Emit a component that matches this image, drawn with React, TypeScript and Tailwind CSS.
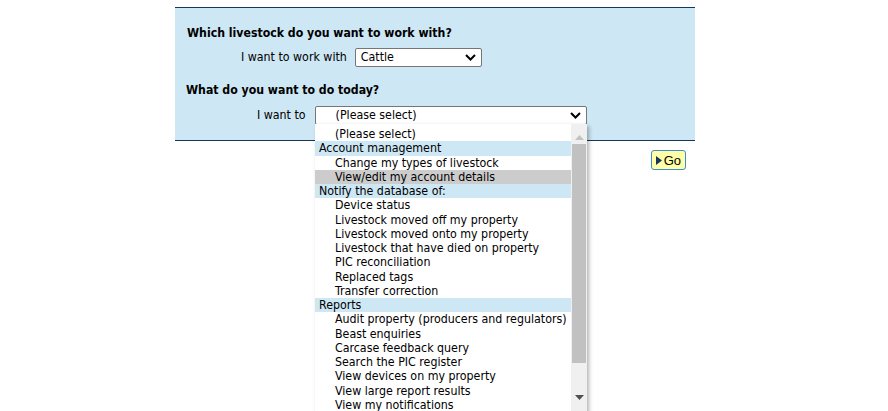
import React from "react";

const groups: { label?: string; items: string[] }[] = [
	{ items: ["(Please select)"] },
	{
		label: "Account management",
		items: ["Change my types of livestock", "View/edit my account details"],
	},
	{
		label: "Notify the database of:",
		items: [
			"Device status",
			"Livestock moved off my property",
			"Livestock moved onto my property",
			"Livestock that have died on property",
			"PIC reconciliation",
			"Replaced tags",
			"Transfer correction",
		],
	},
	{
		label: "Reports",
		items: [
			"Audit property (producers and regulators)",
			"Beast enquiries",
			"Carcase feedback query",
			"Search the PIC register",
			"View devices on my property",
			"View large report results",
			"View my notifications",
		],
	},
];

const Chevron = () => (
	<svg width="11" height="7" viewBox="0 0 11 7" className="shrink-0">
		<path d="M1 1 L5.5 5.5 L10 1" fill="none" stroke="#000" strokeWidth="2" />
	</svg>
);

const Select = ({ value, width, indent }: { value: string; width: string; indent: string }) => (
	<div
		className={`${width} h-[19px] bg-white border border-[#767676] rounded-[2px] flex items-center pr-[5px] ${indent}`}
	>
		<span className="grow">{value}</span>
		<Chevron />
	</div>
);

export default function App() {
	return (
		<div
			className="w-[888px] h-[411px] bg-white overflow-hidden text-[12.3px] text-black"
			style={{ fontFamily: '"DejaVu Sans Condensed", "DejaVu Sans", sans-serif' }}
		>
			<div className="relative ml-[175px] w-[520px] mt-[7px]">
				<div className="bg-[#cde7f4] border-t border-b border-[#17365d] pt-[17px] pb-[15px]">
					<h2 className="pl-[12px] font-bold text-[12.2px] leading-[16px]">
						Which livestock do you want to work with?
					</h2>
					<div className="mt-[7px] flex items-center pl-[66px] gap-[8px]">
						<span>I want to work with</span>
						<Select value="Cattle" width="w-[127px]" indent="pl-[5px]" />
					</div>
					<h2 className="mt-[15px] pl-[11px] font-bold text-[12.2px] leading-[16px]">
						What do you want to do today?
					</h2>
					<div className="mt-[8px] flex items-center pl-[82px] gap-[9px]">
						<span>I want to</span>
						<Select value="(Please select)" width="w-[272px]" indent="pl-[20px]" />
					</div>
				</div>

				<div className="flex justify-end pr-[9px] pt-[9px]">
					<button className="h-[20px] px-[4px] flex items-center gap-[2px] bg-[#ffffa6] border border-[#3a8fd0] rounded-[3px] text-[13px] leading-none">
						<svg width="6" height="9" viewBox="0 0 6 9">
							<path d="M0 0 L6 4.5 L0 9 Z" fill="#17365d" />
						</svg>
						<span style={{ fontFamily: '"Liberation Sans", sans-serif' }}>Go</span>
					</button>
				</div>

				<div className="absolute left-[140px] top-[117px] w-[272px] h-[300px] bg-white shadow-[2px_2px_4px_rgba(0,0,0,0.3)] flex pt-[3px]">
					<div className="grow">
						{groups.map((g, i) => (
							<div key={i}>
								{g.label && (
									<div className="h-[14.25px] leading-[14.25px] bg-[#cde7f4] pl-[4px]">{g.label}</div>
								)}
								{g.items.map((it) => (
									<div
										key={it}
										className={`h-[14.25px] leading-[14.25px] pl-[20px] whitespace-nowrap ${
											it === "View/edit my account details" ? "bg-[#cccccc]" : ""
										}`}
									>
										{it}
									</div>
								))}
							</div>
						))}
					</div>
					<div className="w-[16px] bg-[#f0f0f0] flex flex-col items-center -mt-[3px]">
						<svg width="9" height="5" viewBox="0 0 9 5" className="mt-[11px]">
							<path d="M0 5 L4.5 0 L9 5 Z" fill="#c2c2c2" />
						</svg>
						<div className="mt-[4px] w-[14px] h-[219px] bg-[#c1c1c1]" />
						<svg width="9" height="5" viewBox="0 0 9 5" className="mt-[32px]">
							<path d="M0 0 L4.5 5 L9 0 Z" fill="#505050" />
						</svg>
					</div>
				</div>
			</div>
		</div>
	);
}
